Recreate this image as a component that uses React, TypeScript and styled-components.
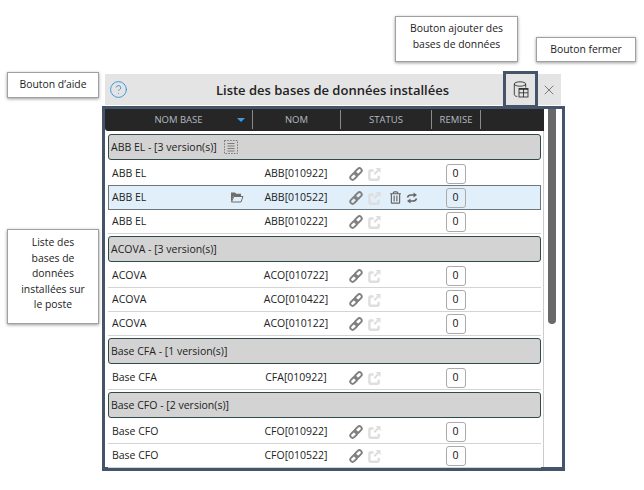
import React from 'react';
import styled, { createGlobalStyle } from 'styled-components';
import { FaRegTrashAlt } from 'react-icons/fa';
import { CircleHelp, X } from 'lucide-react';

const GlobalStyle = createGlobalStyle`
  html, body {
    margin: 0;
    padding: 0;
    background: #fff;
    font-family: 'Open Sans', 'Noto Sans', sans-serif;
  }
`;

// Styled
const Stage = styled.div`
  position: relative;
  width: 644px;
  height: 490px;
  box-sizing: border-box;
  padding: 74px 0 0 105px;
  overflow: hidden;
`;

const Callout = styled.div<{ $x: number; $y: number; $w: number; $h: number; $lift?: number }>`
  position: absolute;
  left: ${p => p.$x}px;
  top: ${p => p.$y}px;
  width: ${p => p.$w}px;
  height: ${p => p.$h}px;
  box-sizing: border-box;
  display: flex;
  align-items: center;
  justify-content: center;
  text-align: center;
  padding-bottom: ${p => p.$lift ?? 0}px;
  background: #fff;
  border: 1px solid #a0a0a0;
  box-shadow: 0 1px 3px rgba(0, 0, 0, 0.4);
  font-size: 10.4px;
  line-height: 15.6px;
  color: #222;
`;

const Window = styled.div`
  width: 456px;
`;

const TitleBar = styled.div`
  display: flex;
  align-items: center;
  height: 31px;
  background: #e4e4e4;
`;

const HelpButton = styled.div`
  display: flex;
  width: 26px;
  justify-content: center;
  color: #2a8fd4;
`;

const Title = styled.div`
  flex: 1;
  padding-left: 31px;
  text-align: center;
  font-size: 13px;
  font-weight: 600;
  color: #222;
`;

const AddButton = styled.div`
  width: 35px;
  height: 36px;
  margin: -3px 0 -2px;
  box-sizing: border-box;
  display: flex;
  align-items: center;
  justify-content: center;
  border: 3px solid #44546a;
  border-bottom-width: 2px;
`;

const CloseButton = styled.div`
  display: flex;
  width: 23px;
  padding-right: 2px;
  box-sizing: border-box;
  justify-content: center;
  color: #444;
`;

const TablePanel = styled.div`
  display: flex;
  width: 463px;
  height: 365px;
  margin: 1px 0 0 -3px;
  box-sizing: border-box;
  border: 3px solid #44546a;
  border-bottom-width: 4px;
`;

const TableArea = styled.div`
  width: 439px;
  height: 100%;
  border-right: 1px solid #ccc;
  box-sizing: border-box;
`;

const Scrollbar = styled.div`
  flex: 1;
  padding-left: 4px;
`;

const Thumb = styled.div`
  width: 8px;
  height: 215px;
  background: #696969;
  border-radius: 0 0 4px 4px;
`;

const Header = styled.div`
  display: grid;
  grid-template-columns: 148px 88px 91px 49px 1fr;
  height: 22px;
  margin-right: -1px;
  background: #262626;
  border-radius: 0 0 0 3px;
`;

const HeaderCell = styled.div`
  position: relative;
  display: flex;
  align-items: center;
  justify-content: center;
  font-size: 9.5px;
  color: #b4bac0;
  height: 19px;
  margin-top: 1px;
  border-right: 1px solid #8a8a8a;
  &:last-child {
    border-right: none;
  }
`;

const SortArrow = styled.span`
  position: absolute;
  right: 7px;
  top: 8px;
  border-left: 4px solid transparent;
  border-right: 4px solid transparent;
  border-top: 4px solid #3b9ae1;
`;

const Body = styled.div`
  height: 336px;
  padding: 1px 2px 0 3px;
  overflow: hidden;
`;

const GroupRow = styled.div`
  display: flex;
  align-items: center;
  gap: 7px;
  height: 24px;
  margin: 2px 0;
  padding-left: 2px;
  background: #d3d3d3;
  border: 1px solid #2f4a4a;
  border-radius: 3px;
  font-size: 10.5px;
  color: #222;
`;

const Row = styled.div<{ $active?: boolean }>`
  position: relative;
  display: grid;
  grid-template-columns: 144px 88px 91px 49px 1fr;
  align-items: center;
  box-sizing: border-box;
  font-size: 10.5px;
  color: #222;
  height: ${p => (p.$active ? '25px' : '24px')};
  margin-top: ${p => (p.$active ? '-1px' : '0')};
  background: ${p => (p.$active ? '#e1effa' : '#fff')};
  border-bottom: ${p => (p.$active ? 'none' : '1px solid #d4d4d4')};
  box-shadow: ${p => (p.$active ? 'inset 0 0 0 1px #6a7680' : 'none')};
`;

const NameCell = styled.div`
  display: flex;
  align-items: center;
  justify-content: space-between;
  padding: 0 8px 2px 4px;
`;

const CodeCell = styled.div`
  padding-bottom: 2px;
  text-align: center;
`;

const StatusCell = styled.div`
  display: flex;
  align-items: center;
  gap: 5px;
  padding-left: 9px;
`;

const TrashIcon = styled(FaRegTrashAlt)`
  width: 11px;
  height: 13px;
  margin-left: 4px;
  color: #666;
`;

const RemiseCell = styled.div`
  display: flex;
  justify-content: center;
`;

const RemiseBox = styled.div`
  width: 20px;
  height: 20px;
  box-sizing: border-box;
  display: flex;
  align-items: center;
  justify-content: center;
  padding-bottom: 1px;
  border: 1px solid #aaa;
  border-radius: 3px;
  font-size: 10.5px;
  color: #111;
`;

interface Version {
  name: string;
  code: string;
  active?: boolean;
}

interface Group {
  title: string;
  list?: boolean;
  versions: Version[];
}

const groups: Group[] = [
  {
    title: 'ABB EL - [3 version(s)]',
    list: true,
    versions: [
      { name: 'ABB EL', code: 'ABB[010922]' },
      { name: 'ABB EL', code: 'ABB[010522]', active: true },
      { name: 'ABB EL', code: 'ABB[010222]' },
    ],
  },
  {
    title: 'ACOVA - [3 version(s)]',
    versions: [
      { name: 'ACOVA', code: 'ACO[010722]' },
      { name: 'ACOVA', code: 'ACO[010422]' },
      { name: 'ACOVA', code: 'ACO[010122]' },
    ],
  },
  {
    title: 'Base CFA - [1 version(s)]',
    versions: [{ name: 'Base CFA', code: 'CFA[010922]' }],
  },
  {
    title: 'Base CFO - [2 version(s)]',
    versions: [
      { name: 'Base CFO', code: 'CFO[010922]' },
      { name: 'Base CFO', code: 'CFO[010522]' },
    ],
  },
];

const ListIcon = () => (
  <svg width="14" height="14" viewBox="0 0 14 14" fill="none" stroke="#666" strokeWidth="0.8">
    <rect x="0.5" y="0.5" width="13" height="13" strokeDasharray="1.6 1.2" />
    <path d="M3.5 3.5h7M3.5 6h7M3.5 8.5h7M3.5 11h7" />
  </svg>
);

const DatabaseIcon = () => (
  <svg width="16" height="17" viewBox="0 0 16 17" fill="none" stroke="#333" strokeWidth="0.9">
    <ellipse cx="7" cy="3" rx="5.7" ry="2.2" />
    <path d="M1.3 3v10.5c0 1 1.2 1.8 3 2M12.7 3v3.5" />
    <rect x="6" y="7.5" width="9" height="8.5" />
    <path d="M6 8h9" strokeWidth="1.6" />
    <path d="M6 11.8h9M10.5 8v8" />
  </svg>
);

const LinkGlyph = () => (
  <svg width="14" height="14" viewBox="0 0 14 14" fill="none" stroke="#808080" strokeWidth="1.9">
    <rect x="0.8" y="7" width="8" height="4.6" rx="2.3" transform="rotate(-45 4.8 9.3)" />
    <rect x="5.2" y="2.4" width="8" height="4.6" rx="2.3" transform="rotate(-45 9.2 4.7)" />
  </svg>
);

const ExportGlyph = () => (
  <svg width="13" height="14" viewBox="0 0 14 14">
    <path
      d="M6 3.2H2.5a1 1 0 0 0-1 1v8a1 1 0 0 0 1 1h8a1 1 0 0 0 1-1V9"
      fill="none"
      stroke="#dedede"
      strokeWidth="2.6"
    />
    <path d="M8 0.5h5.5V6L11.5 4 7.5 8 6 6.5 10 2.5z" fill="#dedede" />
  </svg>
);

const SwapGlyph = () => (
  <svg width="12" height="12" viewBox="0 0 12 12" fill="#666">
    <path d="M1.5 5.5C2 3.5 3.5 3 5 3h3" fill="none" stroke="#666" strokeWidth="1.6" />
    <path d="M7.5 0.5L11 3 7.5 5.5z" />
    <path d="M10.5 6.5C10 8.5 8.5 9 7 9H4" fill="none" stroke="#666" strokeWidth="1.6" />
    <path d="M4.5 6.5L1 9l3.5 2.5z" />
  </svg>
);

const FolderGlyph = () => (
  <svg width="14" height="12" viewBox="0 0 14 12">
    <path d="M1 10V1.5h4l1.2 1.2H11V5H3.5L1.5 10z" fill="#6e6e6e" />
    <path d="M3.8 5.5H13L11 11H1.5z" fill="none" stroke="#6e6e6e" />
  </svg>
);

const App: React.FC = () => {
  return (
    <Stage>
      <GlobalStyle />
      <Window>
        <TitleBar>
          <HelpButton>
            <CircleHelp size={19} strokeWidth={1.1} />
          </HelpButton>
          <Title>Liste des bases de données installées</Title>
          <AddButton>
            <DatabaseIcon />
          </AddButton>
          <CloseButton>
            <X size={16} strokeWidth={1} />
          </CloseButton>
        </TitleBar>
        <TablePanel>
          <TableArea>
            <Header>
              <HeaderCell>
                NOM BASE
                <SortArrow />
              </HeaderCell>
              <HeaderCell>NOM</HeaderCell>
              <HeaderCell>STATUS</HeaderCell>
              <HeaderCell>REMISE</HeaderCell>
              <HeaderCell />
            </Header>
            <Body>
              {groups.map(group => (
                <React.Fragment key={group.title}>
                  <GroupRow>
                    {group.title}
                    {group.list && <ListIcon />}
                  </GroupRow>
                  {group.versions.map(version => (
                    <Row key={version.code} $active={version.active}>
                      <NameCell>
                        {version.name}
                        {version.active && <FolderGlyph />}
                      </NameCell>
                      <CodeCell>{version.code}</CodeCell>
                      <StatusCell>
                        <LinkGlyph />
                        <ExportGlyph />
                        {version.active && (
                          <>
                            <TrashIcon />
                            <SwapGlyph />
                          </>
                        )}
                      </StatusCell>
                      <RemiseCell>
                        <RemiseBox>0</RemiseBox>
                      </RemiseCell>
                    </Row>
                  ))}
                </React.Fragment>
              ))}
            </Body>
          </TableArea>
          <Scrollbar>
            <Thumb />
          </Scrollbar>
        </TablePanel>
      </Window>
      <Callout $x={7} $y={72} $w={92} $h={26} $lift={1}>Bouton d’aide</Callout>
      <Callout $x={7} $y={229} $w={92} $h={95} $lift={5}>
        Liste des
        <br />
        bases de
        <br />
        données
        <br />
        installées sur
        <br />
        le poste
      </Callout>
      <Callout $x={395} $y={16} $w={123} $h={46} $lift={4}>
        Bouton ajouter des
        <br />
        bases de données
      </Callout>
      <Callout $x={536} $y={37} $w={100} $h={25}>Bouton fermer</Callout>
    </Stage>
  );
};

export default App;
